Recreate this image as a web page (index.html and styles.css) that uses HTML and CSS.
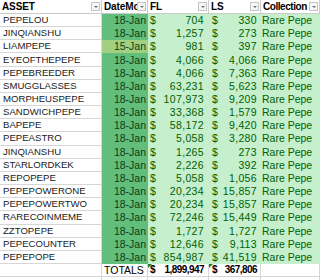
FILE: index.html
```html
<!DOCTYPE html>
<html>
<head>
<meta charset="utf-8">
<link rel="stylesheet" href="styles.css">
</head>
<body>
<div class="sheet">
  <div class="cell head"><span class="htext">ASSET</span><span class="dd"></span></div>
  <div class="cell head"><span class="htext">DateMo</span><span class="dd"></span></div>
  <div class="cell head"><span class="htext">FL</span><span class="dd"></span></div>
  <div class="cell head"><span class="htext">LS</span><span class="dd"></span></div>
  <div class="cell head"><span class="htext tight">Collection</span><span class="dd"></span></div>

  <div class="cell asset">PEPELOU</div><div class="cell date">18-Jan</div><div class="cell money"><span>$</span><span class="num">704</span></div><div class="cell money ls"><span>$</span><span class="num">330</span></div><div class="cell coll">Rare Pepe</div>
  <div class="cell asset">JINQIANSHU</div><div class="cell date">18-Jan</div><div class="cell money"><span>$</span><span class="num">1,257</span></div><div class="cell money ls"><span>$</span><span class="num">273</span></div><div class="cell coll">Rare Pepe</div>
  <div class="cell asset">LIAMPEPE</div><div class="cell date low">15-Jan</div><div class="cell money"><span>$</span><span class="num">981</span></div><div class="cell money ls"><span>$</span><span class="num">397</span></div><div class="cell coll">Rare Pepe</div>
  <div class="cell asset">EYEOFTHEPEPE</div><div class="cell date">18-Jan</div><div class="cell money"><span>$</span><span class="num">4,066</span></div><div class="cell money ls"><span>$</span><span class="num">4,066</span></div><div class="cell coll">Rare Pepe</div>
  <div class="cell asset">PEPEBREEDER</div><div class="cell date">18-Jan</div><div class="cell money"><span>$</span><span class="num">4,066</span></div><div class="cell money ls"><span>$</span><span class="num">7,363</span></div><div class="cell coll">Rare Pepe</div>
  <div class="cell asset">SMUGGLASSES</div><div class="cell date">18-Jan</div><div class="cell money"><span>$</span><span class="num">63,231</span></div><div class="cell money ls"><span>$</span><span class="num">5,623</span></div><div class="cell coll">Rare Pepe</div>
  <div class="cell asset">MORPHEUSPEPE</div><div class="cell date">18-Jan</div><div class="cell money"><span>$</span><span class="num">107,973</span></div><div class="cell money ls"><span>$</span><span class="num">9,209</span></div><div class="cell coll">Rare Pepe</div>
  <div class="cell asset">SANDWICHPEPE</div><div class="cell date">18-Jan</div><div class="cell money"><span>$</span><span class="num">33,368</span></div><div class="cell money ls"><span>$</span><span class="num">1,579</span></div><div class="cell coll">Rare Pepe</div>
  <div class="cell asset">BAPEPE</div><div class="cell date">18-Jan</div><div class="cell money"><span>$</span><span class="num">58,172</span></div><div class="cell money ls"><span>$</span><span class="num">9,420</span></div><div class="cell coll">Rare Pepe</div>
  <div class="cell asset">PEPEASTRO</div><div class="cell date">18-Jan</div><div class="cell money"><span>$</span><span class="num">5,058</span></div><div class="cell money ls"><span>$</span><span class="num">3,280</span></div><div class="cell coll">Rare Pepe</div>
  <div class="cell asset">JINQIANSHU</div><div class="cell date">18-Jan</div><div class="cell money"><span>$</span><span class="num">1,265</span></div><div class="cell money ls"><span>$</span><span class="num">273</span></div><div class="cell coll">Rare Pepe</div>
  <div class="cell asset">STARLORDKEK</div><div class="cell date">18-Jan</div><div class="cell money"><span>$</span><span class="num">2,226</span></div><div class="cell money ls"><span>$</span><span class="num">392</span></div><div class="cell coll">Rare Pepe</div>
  <div class="cell asset">REPOPEPE</div><div class="cell date">18-Jan</div><div class="cell money"><span>$</span><span class="num">5,058</span></div><div class="cell money ls"><span>$</span><span class="num">1,056</span></div><div class="cell coll">Rare Pepe</div>
  <div class="cell asset">PEPEPOWERONE</div><div class="cell date">18-Jan</div><div class="cell money"><span>$</span><span class="num">20,234</span></div><div class="cell money ls"><span>$</span><span class="num">15,857</span></div><div class="cell coll">Rare Pepe</div>
  <div class="cell asset">PEPEPOWERTWO</div><div class="cell date">18-Jan</div><div class="cell money"><span>$</span><span class="num">20,234</span></div><div class="cell money ls"><span>$</span><span class="num">15,857</span></div><div class="cell coll">Rare Pepe</div>
  <div class="cell asset">RARECOINMEME</div><div class="cell date">18-Jan</div><div class="cell money"><span>$</span><span class="num">72,246</span></div><div class="cell money ls"><span>$</span><span class="num">15,449</span></div><div class="cell coll">Rare Pepe</div>
  <div class="cell asset">ZZTOPEPE</div><div class="cell date">18-Jan</div><div class="cell money"><span>$</span><span class="num">1,727</span></div><div class="cell money ls"><span>$</span><span class="num">1,727</span></div><div class="cell coll">Rare Pepe</div>
  <div class="cell asset">PEPECOUNTER</div><div class="cell date">18-Jan</div><div class="cell money"><span>$</span><span class="num">12,646</span></div><div class="cell money ls"><span>$</span><span class="num">9,113</span></div><div class="cell coll">Rare Pepe</div>
  <div class="cell asset">PEPEPOPE</div><div class="cell date">18-Jan</div><div class="cell money"><span>$</span><span class="num">854,987</span></div><div class="cell money ls"><span>$</span><span class="num">41,519</span></div><div class="cell coll">Rare Pepe</div>

  <div class="cell blank"></div><div class="cell blank tlabel">TOTALS</div><div class="cell blank tmoney"><span class="flag"></span><span>$</span><span>1,899,947</span></div><div class="cell blank tmoney ls"><span class="flag"></span><span>$</span><span>367,806</span></div><div class="cell blank"></div>
  <div class="cell blank"></div><div class="cell blank"></div><div class="cell blank"></div><div class="cell blank"></div><div class="cell blank"></div>
</div>
</body>
</html>
```
FILE: styles.css
```css
html, body {
  margin: 0;
  padding: 0;
  background: #ffffff;
}
body {
  width: 320px;
  height: 280px;
  overflow: hidden;
}
.sheet {
  display: grid;
  grid-template-columns: 102px 46px 61px 52px 59px;
  grid-template-rows: 14px repeat(21, 13.16px);
  font-family: "Liberation Sans Narrow", "Liberation Sans", sans-serif;
  font-size: 10.5px;
  line-height: 12px;
  color: #111;
}
.cell {
  box-sizing: border-box;
  border-right: 1px solid #d6d6d6;
  border-bottom: 1px solid #d6d6d6;
  white-space: nowrap;
  overflow: hidden;
  display: flex;
  align-items: center;
  padding: 0 0 0 2px;
}
.head {
  position: relative;
  font-family: "Liberation Sans", sans-serif;
  font-weight: bold;
  font-size: 10px;
  letter-spacing: -0.1px;
  color: #000;
  background: #fff;
  border-color: #cbcbcb;
}
.htext {
  white-space: nowrap;
}
.htext.tight {
  letter-spacing: -0.45px;
}
.dd {
  position: absolute;
  right: 1px;
  top: 2px;
  width: 9px;
  height: 9px;
  box-sizing: border-box;
  border: 1px solid #c4c4c4;
  background: #f7f7f7;
}
.dd::after {
  content: "";
  position: absolute;
  left: 2px;
  top: 3px;
  border-left: 2px solid transparent;
  border-right: 2px solid transparent;
  border-top: 2px solid #6f6f6f;
}
.asset {
  color: #1a1a1a;
  font-size: 9.6px;
  padding-left: 3px;
}
.date {
  background: #63be7b;
  color: #0a3f16;
  justify-content: flex-end;
  padding: 0 1px 0 0;
  border-color: #63be7b;
}
.date.low {
  background: #a2cf80;
  border-color: #a2cf80;
}
.money, .coll {
  background: #c6efce;
  color: #006100;
  border-color: #c6efce;
}
.money {
  justify-content: space-between;
  padding: 0 4px 0 2px;
}
.money.ls {
  padding: 0 3px 0 3px;
}
.num {
  letter-spacing: 0.35px;
}
.coll {
  padding-left: 1px;
}
.blank {
  background: #fff;
  color: #000;
}
.tlabel {
  padding-left: 2px;
}
.tmoney {
  position: relative;
  justify-content: space-between;
  padding: 0 4px 0 2px;
  font-family: "Liberation Sans", sans-serif;
  font-weight: bold;
  font-size: 10px;
  letter-spacing: -0.55px;
  color: #000;
}
.tmoney.ls {
  padding: 0 3px 0 3px;
}
.flag {
  position: absolute;
  left: 0;
  top: 0;
  border-top: 4px solid #1e7b34;
  border-right: 4px solid transparent;
}
```
